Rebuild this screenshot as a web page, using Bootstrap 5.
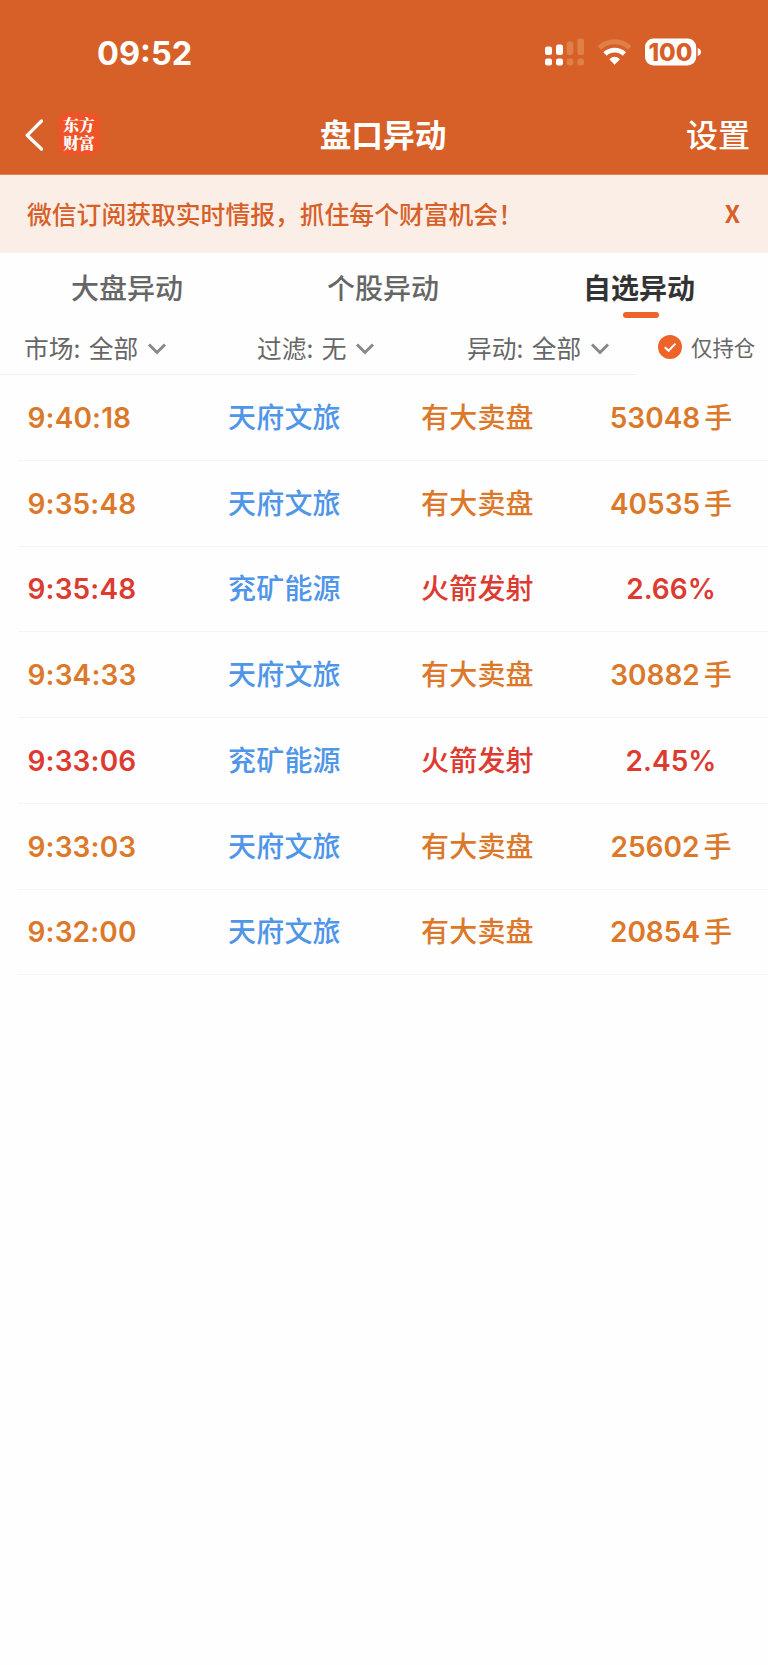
<!DOCTYPE html>
<html lang="zh-CN">
<head>
<meta charset="utf-8">
<meta name="viewport" content="width=device-width, initial-scale=1">
<title>盘口异动</title>
<link href="https://cdn.jsdelivr.net/npm/bootstrap@5.3.0/dist/css/bootstrap.min.css" rel="stylesheet">
<style>
body{font-family:Inter,"Noto Sans CJK SC",sans-serif;background:#fefefe;color:#666;line-height:1;overflow-x:hidden}
.topbar{background:#d75f28;color:#fff;height:175px;border-bottom:1px solid #e38150}
.statusbar{height:104px;padding:2px 66px 0 97px}
.clock{font-size:32.5px;font-weight:700;padding-top:2px}
.titlebar{height:64px;padding:0 17px 4px 25px}
.side{flex:1 1 0}
.back{margin-top:2px}
.logo{width:42px;height:42px;margin-left:15px;border-radius:9px;background:#ee5427;font-family:"Noto Serif CJK SC","Noto Sans CJK SC",serif;font-size:15.8px;line-height:18px;font-weight:900}
.title{font-size:31.7px;font-weight:700;margin-right:9px}
.settings{font-size:32px;font-weight:500;padding:0 1px 2px 0}
.cjk{font-family:"Noto Sans CJK SC",sans-serif}
.notice{background:#fbeee6;color:#d75f28;height:78px;padding:0 28px 2px 27px;font-size:24.8px;font-weight:500}
.close-x{font-weight:700;font-size:24.5px}
.tabs{height:70px}
.tabs button{font-size:28px;font-weight:500;color:#666;background:none;border:0;padding:0 2px 0 0;height:68px}
.tabs .on{font-weight:700;color:#333}
.tabs .on::after{content:"";position:absolute;left:50%;bottom:3px;width:36px;height:6px;margin-left:-17px;border-radius:3px;background:#ee632a}
.filters{height:52px;font-size:24.7px;font-weight:400}
.filters .drops{width:636px;height:52px;border-bottom:1px solid #f2f2f2;padding:0 0 2px 24px}
.drop{white-space:pre;word-spacing:3px}
.drop svg{margin:-3px 0 0 9px}
.d1{width:233px}.d2{width:210px}
.hold{font-size:21.4px;padding:0 0 4px 22px}
.hold svg{margin-right:9px}
.feed{margin-left:18px}
.entry{height:85.75px;border-bottom:1px solid #f5f5f5;font-size:28px;font-weight:500;padding-top:1px}
.entry>div{white-space:nowrap}
.t{width:210px;padding-left:9.5px;font-weight:600;letter-spacing:.15px}
.n{width:193px;color:#4f95e8;letter-spacing:.2px}
.k{width:161px;letter-spacing:.2px}
.v{width:178px;text-align:center}
.v b{font-weight:600}
.v i{font-style:normal;margin-left:4px}
.sell{color:#dc782a}.rise{color:#dc3b32}
</style>
</head>
<body>
<header class="topbar">
  <div class="statusbar d-flex align-items-center justify-content-between">
    <span class="clock">09:52</span>
    <svg width="158" height="30" viewBox="544 37.5 158 30" fill="#fff">
      <rect x="545" y="46" width="7" height="8.5" rx="2.2"/><rect x="556" y="44" width="7" height="10.5" rx="2.2"/>
      <rect x="545" y="58" width="7" height="7" rx="2.2"/><rect x="556" y="58" width="7" height="7" rx="2.2"/>
      <g fill="#e08049"><rect x="566.7" y="41" width="6.6" height="13.5" rx="2.2"/><rect x="577.4" y="38" width="6.6" height="16.5" rx="2.2"/><rect x="566.7" y="58" width="6.6" height="7" rx="2.2"/><rect x="577.4" y="58" width="6.6" height="7" rx="2.2"/></g>
      <path d="M599.4 47.4A22 22 0 0 1 629.8 47.4" fill="none" stroke="#e08049" stroke-width="5"/>
      <path d="M605 53.6A14 14 0 0 1 624.4 53.6" fill="none" stroke="#fff" stroke-width="4.8"/>
      <path d="M609.3 58.7Q614.6 54 620 58.7L614.6 64.2Z"/>
      <rect x="645" y="38" width="51.2" height="27" rx="8.5"/><path d="M697.7 47.6Q701 48.8 701 51.6T697.7 55.6Z"/>
      <text x="670.4" y="60.2" fill="#d75f28" text-anchor="middle" font-family="Inter" font-size="24.6" font-weight="800" textLength="44" lengthAdjust="spacingAndGlyphs">100</text>
    </svg>
  </div>
  <div class="titlebar d-flex align-items-center">
    <div class="side d-flex align-items-center">
      <svg class="back" width="18" height="32" viewBox="0 0 18 32"><path d="M16.5 2L2.2 16.3L16.5 30" fill="none" stroke="#fff" stroke-width="3.3" stroke-linejoin="round" stroke-linecap="round"/></svg>
      <div class="logo d-flex align-items-center justify-content-center"><span>东方<br>财富</span></div>
    </div>
    <div class="title cjk">盘口异动</div>
    <div class="side text-end settings cjk">设置</div>
  </div>
</header>
<div class="notice cjk d-flex align-items-center justify-content-between"><span>微信订阅获取实时情报，抓住每个财富机会！</span><span class="close-x">X</span></div>
<nav class="tabs cjk d-flex">
  <button class="flex-fill w-100">大盘异动</button><button class="flex-fill w-100">个股异动</button><button class="on flex-fill w-100 position-relative">自选异动</button>
</nav>
<div class="filters cjk d-flex">
  <div class="drops d-flex align-items-center">
    <div class="drop d1"><span>市场: 全部</span><svg width="20" height="14" viewBox="0 0 20 14"><path d="M2 1.5L10 9.5L18 1.5" fill="none" stroke="#888" stroke-width="3"/></svg></div>
    <div class="drop d2"><span>过滤: 无</span><svg width="20" height="14" viewBox="0 0 20 14"><path d="M2 1.5L10 9.5L18 1.5" fill="none" stroke="#888" stroke-width="3"/></svg></div>
    <div class="drop d3"><span>异动: 全部</span><svg width="20" height="14" viewBox="0 0 20 14"><path d="M2 1.5L10 9.5L18 1.5" fill="none" stroke="#888" stroke-width="3"/></svg></div>
  </div>
  <div class="hold d-flex align-items-center"><svg width="24" height="24" viewBox="0 0 24 24"><circle cx="12" cy="12" r="12" fill="#ee632a"/><path d="M6.8 12.2L10.6 15.8L17.4 8.6" fill="none" stroke="#fff" stroke-width="2"/></svg>仅持仓</div>
</div>
<main class="feed">
  <div class="entry d-flex align-items-center sell"><div class="t">9:40:18</div><div class="n">天府文旅</div><div class="k">有大卖盘</div><div class="v"><b>53048</b><i>手</i></div></div>
  <div class="entry d-flex align-items-center sell"><div class="t">9:35:48</div><div class="n">天府文旅</div><div class="k">有大卖盘</div><div class="v"><b>40535</b><i>手</i></div></div>
  <div class="entry d-flex align-items-center rise"><div class="t">9:35:48</div><div class="n">兖矿能源</div><div class="k">火箭发射</div><div class="v"><b>2.66%</b></div></div>
  <div class="entry d-flex align-items-center sell"><div class="t">9:34:33</div><div class="n">天府文旅</div><div class="k">有大卖盘</div><div class="v"><b>30882</b><i>手</i></div></div>
  <div class="entry d-flex align-items-center rise"><div class="t">9:33:06</div><div class="n">兖矿能源</div><div class="k">火箭发射</div><div class="v"><b>2.45%</b></div></div>
  <div class="entry d-flex align-items-center sell"><div class="t">9:33:03</div><div class="n">天府文旅</div><div class="k">有大卖盘</div><div class="v"><b>25602</b><i>手</i></div></div>
  <div class="entry d-flex align-items-center sell"><div class="t">9:32:00</div><div class="n">天府文旅</div><div class="k">有大卖盘</div><div class="v"><b>20854</b><i>手</i></div></div>
</main>
<script src="https://cdn.jsdelivr.net/npm/bootstrap@5.3.0/dist/js/bootstrap.bundle.min.js"></script>
</body>
</html>
